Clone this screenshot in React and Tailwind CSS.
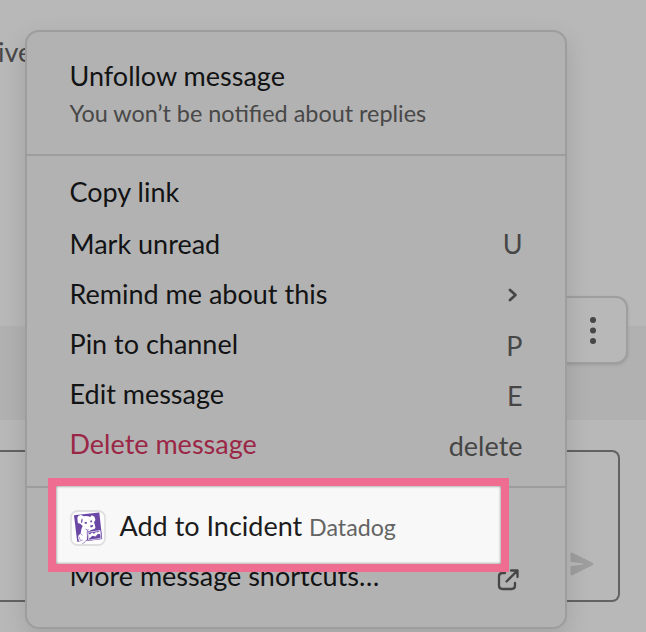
import React from "react";

function DatadogIcon() {
  return (
    <svg viewBox="0 0 36 36" className="h-9 w-9 shrink-0">
      <rect x="1" y="1" width="34" height="34" rx="6.5" fill="#fdfcfe" stroke="#dfdfe1" strokeWidth="1.8" />
      <path d="M4 5.2 29.3 2.6 32.2 29 7.2 31.7Z" fill="#6b47a5" />
      <path d="M7.3 7.8Q8 5 10.8 5.1L14 6.2Q17.5 5.7 20.2 7L21.8 5.3 24.5 6.8 25.4 10 24 12.2 25 15.2Q26 18 24.4 19L20.3 20.2 19.6 21.5 16.8 21.8 17 30 13.2 28.8 10.4 24.8 11.4 19 12.7 16 10.3 13.8 7.9 13Z" fill="#fff" />
      <path d="M11.2 9.8 12.7 8.4 12.3 12.2 11 12.9ZM14.7 11.9h2.1v1.9h-2.1ZM20.3 10.6h1.8v1.6h-1.8ZM20 15.4l3.2-.5-.6 2.1-1.9.5ZM14.8 18.4 17.5 19.8 19.5 19.4 17.2 20.7Z" fill="#6b47a5" />
      <path d="M17 21.6 30.8 19.5 32 29.1 18 31Z" fill="#6b47a5" />
      <path d="M17.8 22.4 30.1 20.5 31 28.4 18.6 30.1Z" fill="#6b47a5" stroke="#fff" strokeWidth=".7" />
      <path d="M18.2 22.9 20 24.6 22 22.6 24 23.8 26 21.9 27.5 22.6 29.8 20.9 30.3 24.3 28 23.8 25.5 26.4 22.5 25.7 19 28.7Z" fill="#fff" />
      <path d="M9 24.2Q12 22.8 13.8 25.4 16.8 26 16.3 29.6 15.5 33.9 12 33.9L11.4 31.9 8.8 30.8 8 27.2Z" fill="#fff" />
      <path d="M9 24.8 10.6 23.7 12.7 25.4M9 26.7 10.4 30.5 12.8 30M12.2 33.5Q15.2 33.3 15.9 30.3" fill="none" stroke="#8a6eb8" strokeWidth=".7" />
    </svg>
  );
}

function Background() {
  return (
    <div className="flex h-[632px] w-full flex-col bg-[#b8b8b8]">
      <div className="h-[326px] pt-[36px] text-[27px] leading-[32px] text-[#484848]">
        <span className="-ml-[2px]">ive</span>
      </div>
      <div className="h-[94px] bg-[#b1b1b1]" />
      <div className="mt-[30px] mr-[26px] flex h-[152px] items-end justify-end rounded-r-lg border-y-2 border-r-2 border-[#626262] pr-[24px] pb-[24px]">
        <svg viewBox="0 0 24 24" className="h-6 w-6" fill="#9e9e9e">
          <path d="M.5 2Q.5 0 2.5.8L23 11Q24 12 23 13L2.5 23.2Q.5 24 .5 22V15.2Q.5 14.3 1.5 14.1L13 12.5V11.4L1.5 10Q.5 9.8.5 8.8Z" />
        </svg>
      </div>
    </div>
  );
}

function MenuRow({ label, hint, className = "" }) {
  return (
    <div className={`flex h-[50px] items-center justify-between ${className}`}>
      <span>{label}</span>
      <span className="translate-y-[2px] text-[#464646]">{hint}</span>
    </div>
  );
}

function Menu() {
  return (
    <div className="absolute top-[30px] left-[25px] flex h-[599px] w-[542px] flex-col rounded-[14px] border-2 border-[#9d9d9d] bg-[#b2b2b2] text-[27px] text-[#121314] shadow-[0_8px_24px_rgba(0,0,0,0.12)]">
      <div className="h-[124px] border-b-2 border-[#9d9d9d] px-[42.5px] pt-[26px]">
        <div className="h-[36px] leading-[36px]">Unfollow message</div>
        <div className="mt-[2px] text-[23.4px] leading-[34px] text-[#484848]">You won’t be notified about replies</div>
      </div>
      <div className="h-[332px] border-b-2 border-[#9d9d9d] pt-[11px] pr-[42.5px] pl-[42.5px]">
        <MenuRow label="Copy link" className="mb-[2px]" />
        <MenuRow label="Mark unread" hint={<span className="relative -top-[2px]">U</span>} />
        <MenuRow
          label="Remind me about this"
          hint={
            <svg viewBox="0 0 10 14" className="mr-[4.5px] h-[14px] w-[10px] -translate-y-[1px]" fill="none" stroke="#464646" strokeWidth="2.7" strokeLinecap="round" strokeLinejoin="round">
              <path d="M2 2 7.5 7 2 12" />
            </svg>
          }
        />
        <MenuRow label="Pin to channel" hint="P" />
        <MenuRow label="Edit message" hint="E" />
        <MenuRow label="Delete message" hint="delete" className="text-[#9b2746]" />
      </div>
      <div className="px-[42.5px] pt-[63px]">
        <MenuRow
          label="More message shortcuts…"
          hint={
            <svg viewBox="0 0 22 22" className="mr-[3.5px] h-[22px] w-[22px] translate-y-[2px]" fill="none" stroke="#464646" strokeWidth="2.3" strokeLinecap="round" strokeLinejoin="round">
              <path d="M8 4H5.5Q2 4 2 7.5V16.5Q2 20 5.5 20H14.5Q18 20 18 16.5V14M14 1.5H20.5V8M20.5 1.5 9.5 12.5" />
            </svg>
          }
        />
      </div>
    </div>
  );
}

export default function App() {
  return (
    <div className="relative h-[632px] w-[646px] overflow-hidden font-['Lato',sans-serif]">
      <Background />
      <div className="absolute top-[296px] left-[540px] flex h-[68px] w-[88px] items-center justify-end rounded-[12px] border-2 border-[#9f9f9f] bg-[#b8b8b8] pr-[30px] shadow-[0_1px_3px_rgba(0,0,0,0.12)]">
        <svg viewBox="0 0 6 28" className="h-7 w-[6px] translate-y-[0.5px]" fill="#464646">
          <circle cx="3" cy="3.5" r="3" />
          <circle cx="3" cy="14" r="3" />
          <circle cx="3" cy="24.5" r="3" />
        </svg>
      </div>
      <Menu />
      <div className="absolute top-[478px] left-[48px] flex h-[94px] w-[461px] items-center border-8 border-[#ee6d91] bg-[#f8f8f8] pt-[5px] pl-[14px] text-[27px] text-[#1d1c1d] shadow-[inset_0_0_3px_rgba(0,0,0,0.55)]">
        <DatadogIcon />
        <span className="-mt-[2px] ml-[13.5px]">
          Add to Incident <span className="text-[23.2px] text-[#646464]">Datadog</span>
        </span>
      </div>
    </div>
  );
}
